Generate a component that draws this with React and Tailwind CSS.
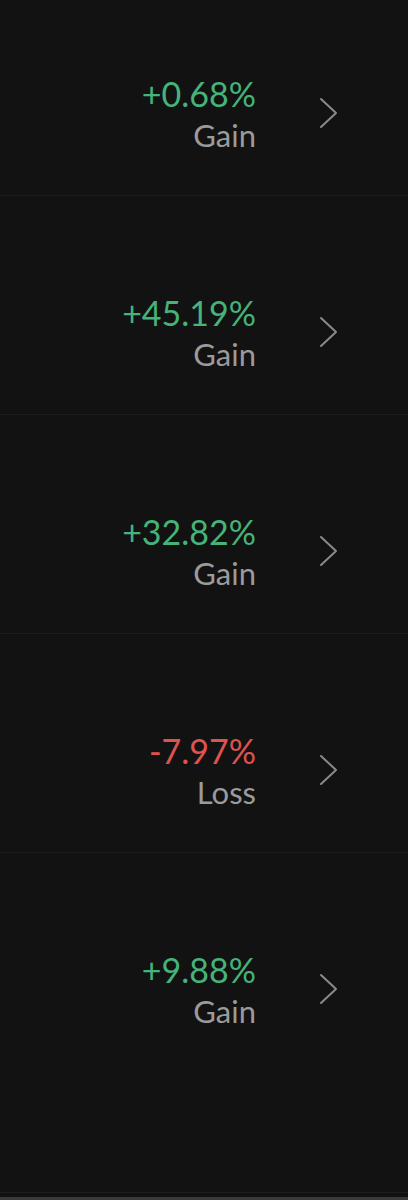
const rows = [
  { value: '+0.68%', label: 'Gain', up: true },
  { value: '+45.19%', label: 'Gain', up: true },
  { value: '+32.82%', label: 'Gain', up: true },
  { value: '-7.97%', label: 'Loss', up: false },
  { value: '+9.88%', label: 'Gain', up: true },
]

function Chevron() {
  return (
    <svg width="20" height="32" viewBox="0 0 20 32" fill="none" className="shrink-0">
      <path d="M2 2 L17 16 L2 30" stroke="#8a8a8a" strokeWidth="2" strokeLinecap="round" strokeLinejoin="round" />
    </svg>
  )
}

function Row({ item, first, last }) {
  const height = first ? 'h-[196px]' : last ? 'h-[340px]' : 'h-[219px]'
  const pad = first ? 'pt-[74px]' : 'pt-[97px]'
  return (
    <div className={`${height} ${pad} border-b border-[#1e1e1e] flex justify-end pr-[69px]`}>
      <div className="flex items-start gap-[63px]">
        <div className="flex flex-col items-end">
          <span className={`text-[34px] leading-[40px] ${item.up ? 'text-[#45b37a]' : 'text-[#df5250]'}`}>
            {item.value}
          </span>
          <span className="text-[31px] leading-[42px] text-[#9b9b9b]">{item.label}</span>
        </div>
        <div className="mt-[23px]">
          <Chevron />
        </div>
      </div>
    </div>
  )
}

export default function App() {
  return (
    <div className="w-[408px] h-[1200px] bg-[#121212] flex flex-col overflow-hidden" style={{ fontFamily: 'Lato, "Open Sans", sans-serif' }}>
      {rows.map((item, i) => (
        <Row key={i} item={item} first={i === 0} last={i === rows.length - 1} />
      ))}
      <div className="flex-1" />
      <div className="h-[3px] bg-[#3a3a3a]" />
    </div>
  )
}
